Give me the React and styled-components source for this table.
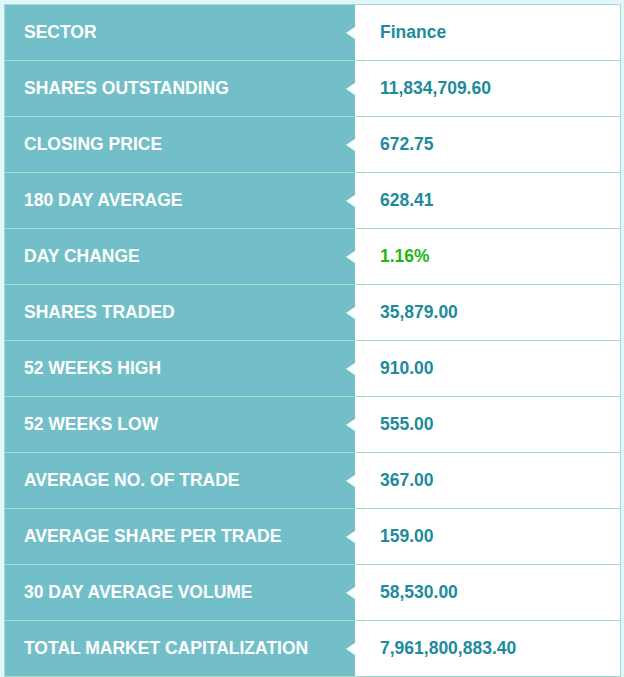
import React from "react";
import styled, { createGlobalStyle } from "styled-components";

const Global = createGlobalStyle`
  html, body { margin: 0; padding: 0; background: #e1f6f8; }
  body { font-family: "Liberation Sans", Arial, sans-serif; }
`;

const Page = styled.div`
  padding: 4px 3px 0 4px;
`;

const Table = styled.div`
  display: flex;
  flex-direction: column;
  border: 1px solid #a0dccd;
  border-bottom: none;
  background: #fff;
`;

const Row = styled.div`
  display: grid;
  grid-template-columns: 350px 1fr;
  height: 56px;
`;

const Label = styled.div`
  position: relative;
  display: flex;
  align-items: center;
  padding: 0 0 1px 19px;
  background: #72bfc9;
  border-bottom: 1px solid #a9dbcb;
  color: #fff;
  font-weight: bold;
  font-size: 17.5px;
  &::after {
    content: "";
    position: absolute;
    right: 0;
    top: 50%;
    margin-top: -6px;
    border-style: solid;
    border-width: 6px 9px 6px 0;
    border-color: transparent #fff transparent transparent;
  }
`;

const Value = styled.div`
  display: flex;
  align-items: center;
  padding: 0 0 1px 25px;
  border-bottom: 1px solid #a0dccd;
  color: ${(p) => (p.$up ? "#22b814" : "#1d8b9b")};
  font-weight: bold;
  font-size: 17.5px;
`;

const rows = [
  ["SECTOR", "Finance"],
  ["SHARES OUTSTANDING", "11,834,709.60"],
  ["CLOSING PRICE", "672.75"],
  ["180 DAY AVERAGE", "628.41"],
  ["DAY CHANGE", "1.16%", true],
  ["SHARES TRADED", "35,879.00"],
  ["52 WEEKS HIGH", "910.00"],
  ["52 WEEKS LOW", "555.00"],
  ["AVERAGE NO. OF TRADE", "367.00"],
  ["AVERAGE SHARE PER TRADE", "159.00"],
  ["30 DAY AVERAGE VOLUME", "58,530.00"],
  ["TOTAL MARKET CAPITALIZATION", "7,961,800,883.40"],
];

export default function App() {
  return (
    <Page>
      <Global />
      <Table>
        {rows.map(([l, v, up]) => (
          <Row key={l}>
            <Label>{l}</Label>
            <Value $up={up}>{v}</Value>
          </Row>
        ))}
      </Table>
    </Page>
  );
}
